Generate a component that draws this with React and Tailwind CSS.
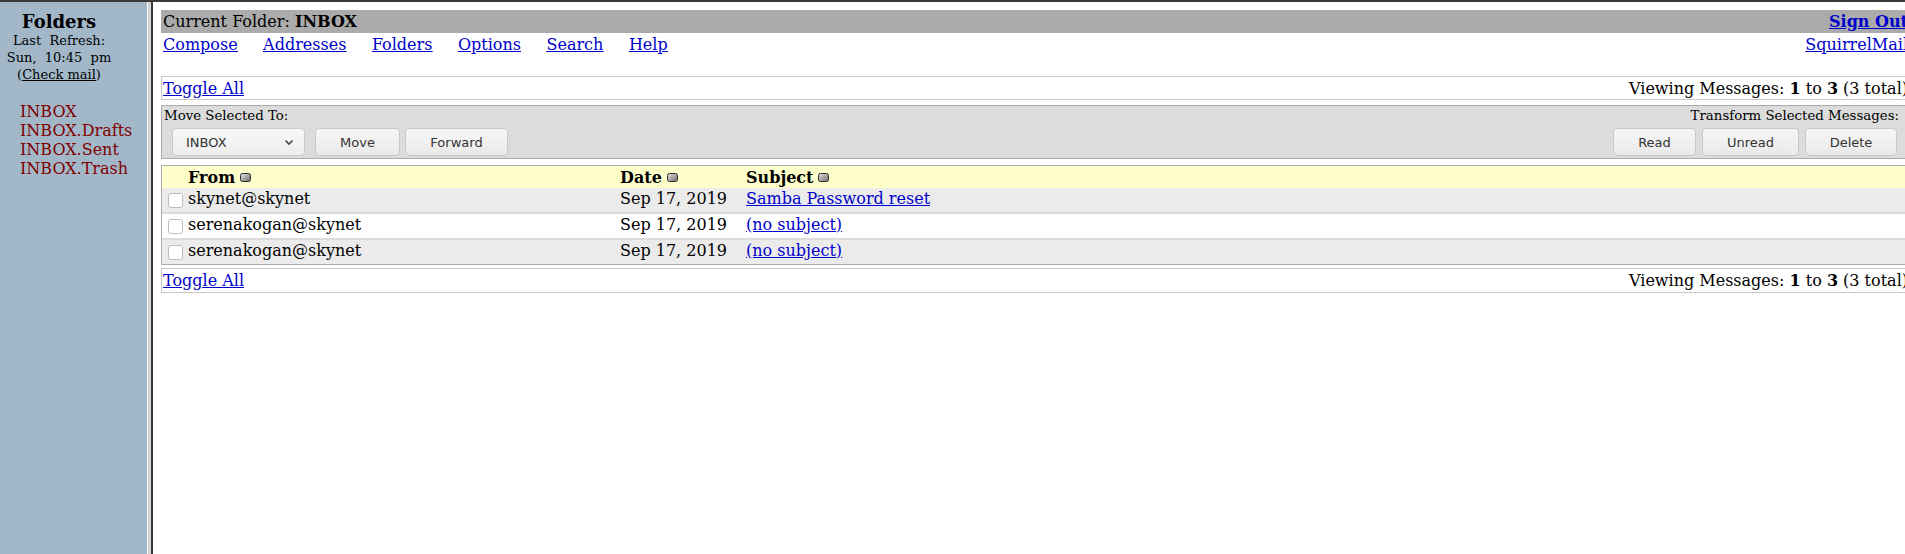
import React from 'react';

function SortIcon() {
  return (
    <svg width="11" height="9" viewBox="0 0 11 9" className="inline-block ml-[5px]">
      <defs>
        <linearGradient id="sortg" x1="0" y1="0" x2="1" y2="1">
          <stop offset="0" stopColor="#e6e6e6" />
          <stop offset="1" stopColor="#6a6a6a" />
        </linearGradient>
      </defs>
      <rect x="0.5" y="0.5" width="10" height="8" rx="2" fill="url(#sortg)" stroke="#2a2a2a" />
    </svg>
  );
}

function Btn({ w, children }) {
  return (
    <button
      className={`${w} h-[28px] rounded-[4px] border border-[#c9c9c9] bg-gradient-to-b from-[#f6f6f6] to-[#e9e9e9] text-[13px] text-[#333] font-['DejaVu_Sans',sans-serif]`}
    >
      {children}
    </button>
  );
}

const folders = ['INBOX', 'INBOX.Drafts', 'INBOX.Sent', 'INBOX.Trash'];

const messages = [
  { from: 'skynet@skynet', date: 'Sep 17, 2019', subject: 'Samba Password reset', bg: 'bg-[#ebebeb]' },
  { from: 'serenakogan@skynet', date: 'Sep 17, 2019', subject: '(no subject)', bg: 'bg-white' },
  { from: 'serenakogan@skynet', date: 'Sep 17, 2019', subject: '(no subject)', bg: 'bg-[#ebebeb]' },
];

function Sidebar() {
  return (
    <aside className="w-[147px] shrink-0 bg-[#a2b8c9] text-black">
      <div className="w-[118px] pt-[9px] text-center">
        <div className="text-[18px] font-bold leading-[21px]">Folders</div>
        <div className="text-[13px] leading-[17px] whitespace-nowrap">
          Last&nbsp; Refresh:
          <br />
          Sun,&nbsp; 10:45&nbsp; pm
          <br />
          (<a className="underline">Check mail</a>)
        </div>
      </div>
      <ul className="mt-[19px] pl-[20px] text-[16px] leading-[19px] text-[#800000]">
        {folders.map((f) => (
          <li key={f}>{f}</li>
        ))}
      </ul>
    </aside>
  );
}

function ToggleBar({ h }) {
  return (
    <div className={`${h} flex items-center justify-between border border-[#c8c8c8] px-[1px]`}>
      <a className="text-[#0000cc] underline">Toggle All</a>
      <span className="whitespace-nowrap">
        Viewing Messages: <b>1</b> to <b>3</b> (3 total)
      </span>
    </div>
  );
}

export default function App() {
  return (
    <div className="h-[554px] overflow-hidden bg-white font-['DejaVu_Serif',serif] text-[16px] text-black">
      <div className="h-[2px] bg-[#3a3a3a]" />
      <div className="flex h-[552px]">
        <Sidebar />
        {/* frame border */}
        <div className="flex w-[6px] shrink-0">
          <div className="w-[1px] bg-white" />
          <div className="w-[3px] bg-[#d4d4d4]" />
          <div className="w-[2px] bg-[#3a3a3a]" />
        </div>

        <div className="flex-1 overflow-hidden pl-2 pt-2">
          <div className="w-[1749px] leading-[19px]">
            {/* header bar */}
            <div className="flex h-[23px] items-center justify-between bg-[#ababab] px-[2px]">
              <span>
                Current Folder: <b>INBOX</b>
              </span>
              <a className="font-bold text-[#0000cc] underline">Sign Out</a>
            </div>
            <div className="flex h-[23px] items-center justify-between px-[2px]">
              <nav className="flex gap-[25.5px] text-[#0000cc] underline">
                <a>Compose</a>
                <a>Addresses</a>
                <a>Folders</a>
                <a>Options</a>
                <a>Search</a>
                <a>Help</a>
              </nav>
              <a className="text-[#0000cc] underline">SquirrelMail</a>
            </div>

            <div className="mt-[20px]">
              <ToggleBar h="h-[24px]" />
            </div>

            {/* action area */}
            <div className="mt-[5px] flex h-[54px] justify-between border border-[#ababab] bg-[#dcdcdc] px-[2px] pt-[2px]">
              <div>
                <div className="text-[13.33px] leading-[16px]">Move Selected To:</div>
                <div className="mt-[4px] flex items-center pl-[8px]">
                  <div className="flex h-[28px] w-[133px] items-center justify-between rounded-[4px] border border-[#c9c9c9] bg-gradient-to-b from-[#f8f8f8] to-[#ededed] pl-[13px] pr-[10px] font-['DejaVu_Sans',sans-serif] text-[13px] text-[#333]">
                    <span>INBOX</span>
                    <svg width="10" height="7" viewBox="0 0 10 7">
                      <path d="M1.5 1.5 L5 5 L8.5 1.5" fill="none" stroke="#444" strokeWidth="1.6" />
                    </svg>
                  </div>
                  <div className="ml-[10px] flex gap-[5px]">
                    <Btn w="w-[85px]">Move</Btn>
                    <Btn w="w-[103px]">Forward</Btn>
                  </div>
                </div>
              </div>
              <div className="flex flex-col items-end pr-[8px]">
                <div className="text-[13.33px] leading-[16px]">Transform Selected Messages:</div>
                <div className="mt-[4px] flex gap-[6px] pr-[2px]">
                  <Btn w="w-[83px]">Read</Btn>
                  <Btn w="w-[97px]">Unread</Btn>
                  <Btn w="w-[92px]">Delete</Btn>
                </div>
              </div>
            </div>

            {/* message list */}
            <div className="mt-[6px] border border-[#ababab]">
              <div className="flex h-[22px] items-center bg-[#ffffcc] font-bold">
                <div className="w-[26px]" />
                <div className="flex w-[432px] items-center">
                  From
                  <SortIcon />
                </div>
                <div className="flex w-[126px] items-center">
                  Date
                  <SortIcon />
                </div>
                <div className="flex items-center">
                  Subject
                  <SortIcon />
                </div>
              </div>
              {messages.map((m, i) => (
                <div
                  key={i}
                  className={`flex items-center ${m.bg} ${i < messages.length - 1 ? 'h-[26px] border-b-2 border-[#dcdcdc]' : 'h-[24px]'}`}
                >
                  <div className="flex w-[26px] justify-end pr-[5px]">
                    <span className="block h-[15px] w-[15px] rounded-[3px] border border-[#bdbdbd] bg-white" />
                  </div>
                  <div className="w-[432px] pb-[4px]">{m.from}</div>
                  <div className="w-[126px] pb-[4px]">{m.date}</div>
                  <div className="pb-[4px]">
                    <a className="text-[#0000cc] underline">{m.subject}</a>
                  </div>
                </div>
              ))}
            </div>

            <div className="mt-[3px]">
              <ToggleBar h="h-[25px]" />
            </div>
          </div>
        </div>
      </div>
    </div>
  );
}
